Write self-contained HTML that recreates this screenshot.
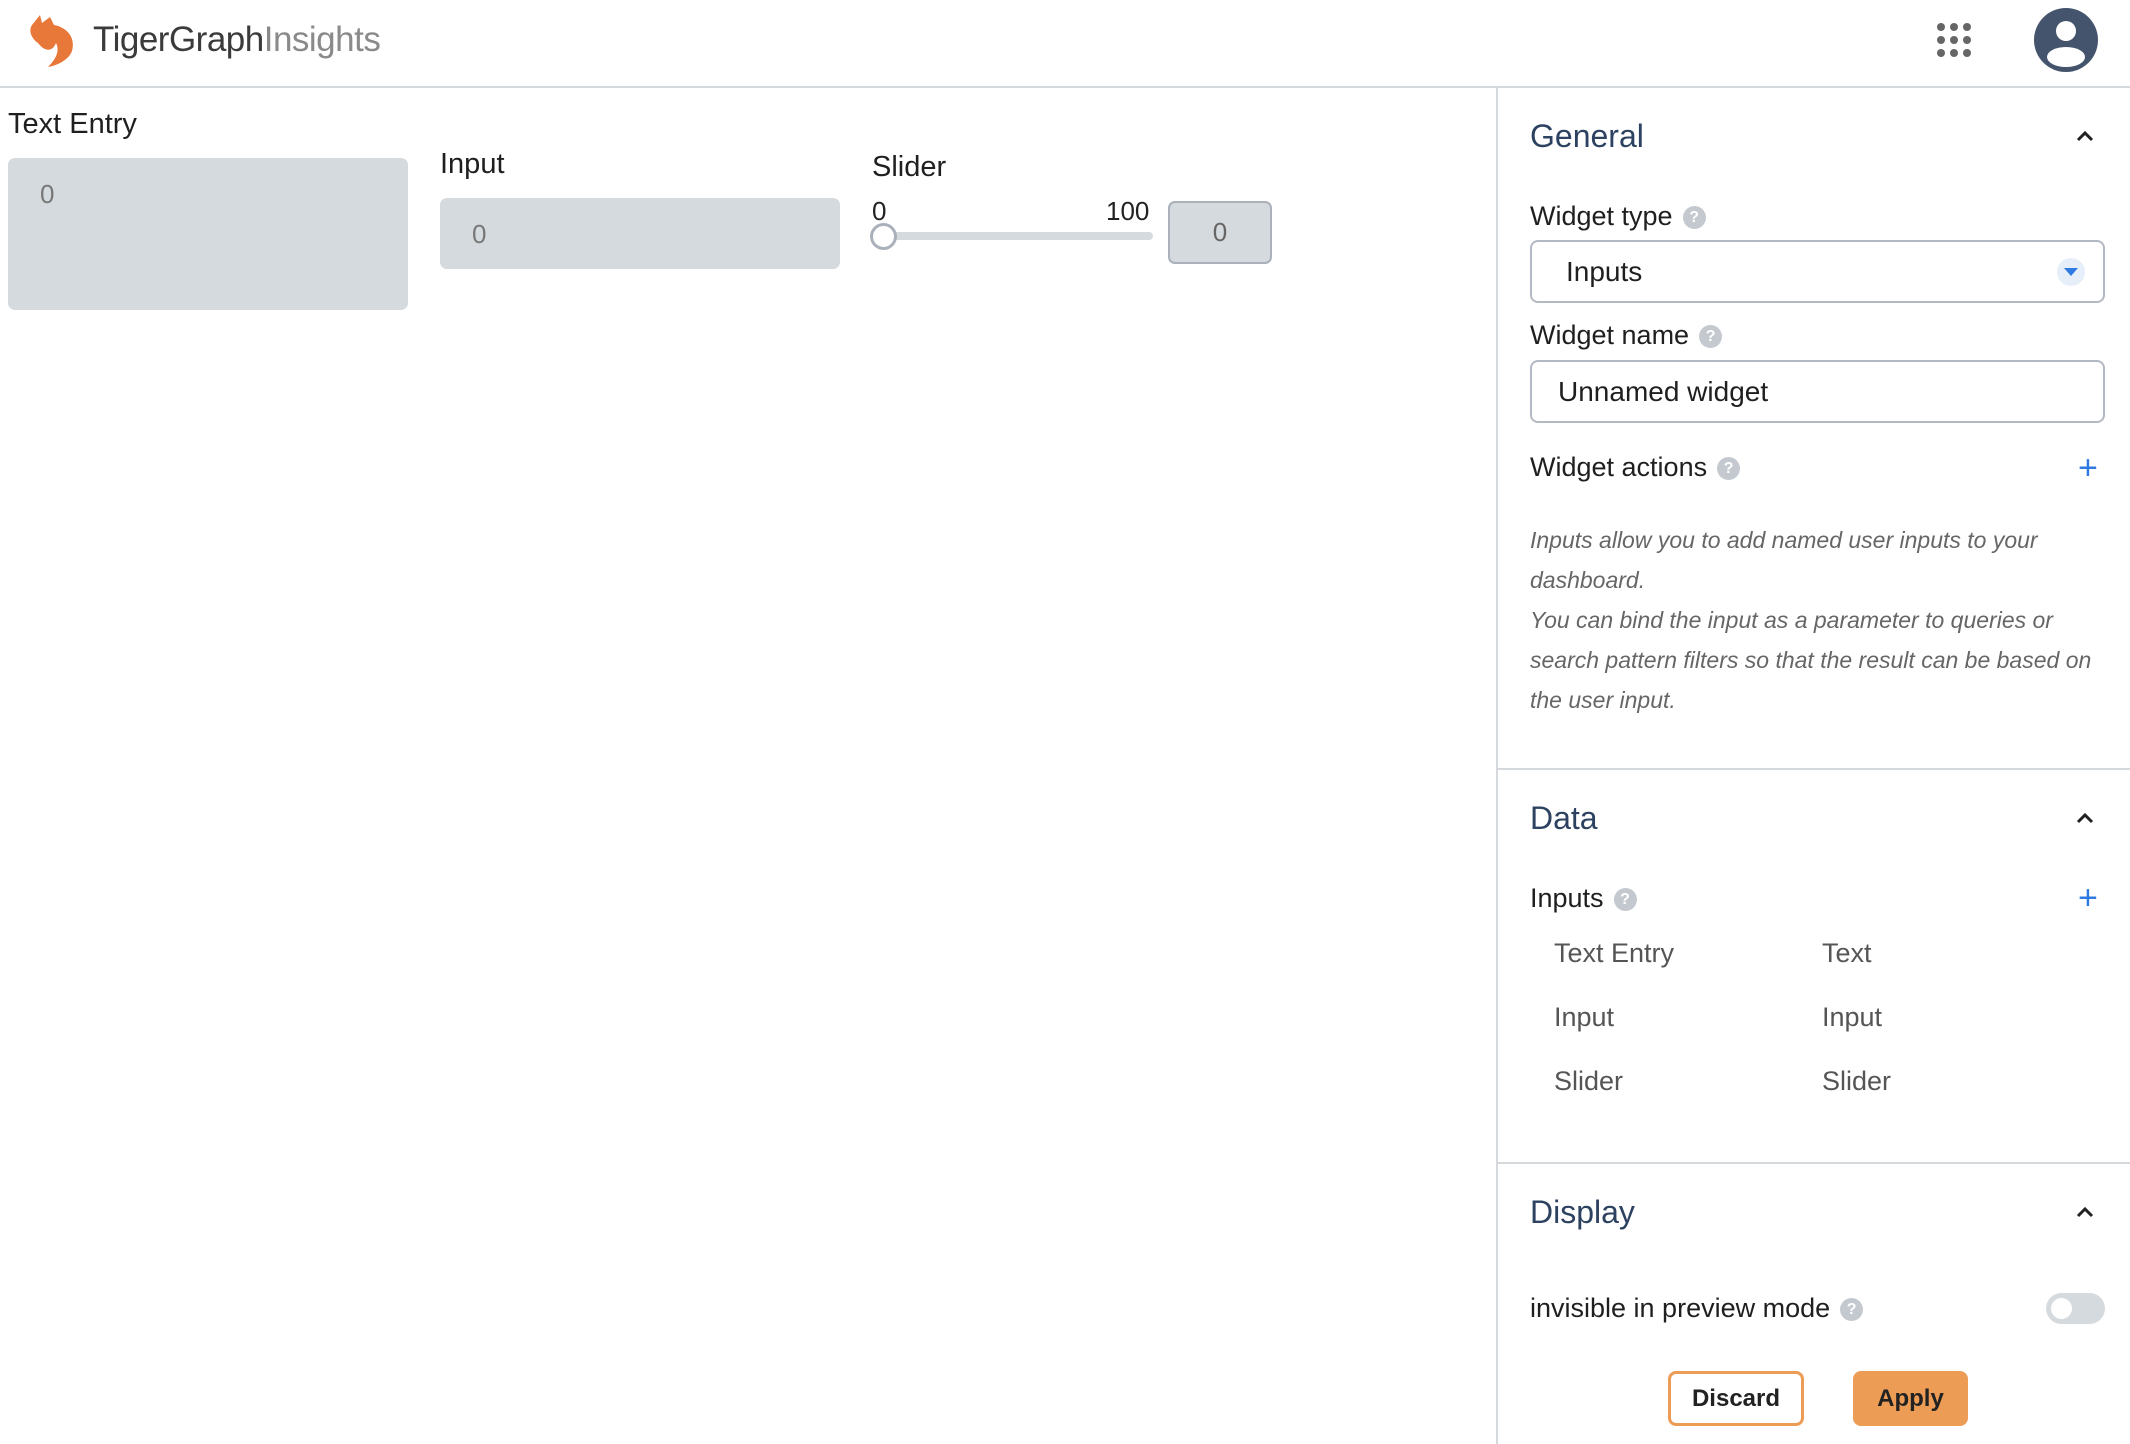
<!DOCTYPE html>
<html><head><meta charset="utf-8"><style>
*{box-sizing:border-box;margin:0;padding:0}
body{width:2130px;height:1444px;overflow:hidden;background:#fff;font-family:"Liberation Sans",sans-serif;color:#222;position:relative}
.a{position:absolute;white-space:nowrap}
.lbl{font-size:29px;color:#1f1f1f}
.box{position:absolute;background:#d5dade;border-radius:7px}
.zero{position:absolute;font-size:26px;color:#777}
.h{font-size:32px;color:#2c4260}
.f{font-size:27px;color:#1f1f1f}
.q{display:inline-block;width:23px;height:23px;border-radius:50%;background:#c4c9d0;color:#fff;font-size:16px;font-weight:bold;text-align:center;line-height:23px;vertical-align:middle;margin-left:10px}
.inp{position:absolute;left:1530px;width:575px;height:63px;border:2px solid #b3b9c2;border-radius:8px;font-size:28px;color:#1f1f1f;line-height:59px}
.it{font-size:23px;font-style:italic;color:#666;line-height:40px}
.row{font-size:27px;color:#555}
.hr{position:absolute;left:1497px;width:633px;height:2px;background:#d5d8dc}
.chev{position:absolute;left:2075px;width:20px;height:20px}
.plus{position:absolute;font-size:34px;color:#2f7ae0;left:2078px}
</style></head><body>
<svg class="a" style="left:26px;top:13px" width="54" height="54" viewBox="0 0 54 54"><path d="M6 12 L14 2 L16 10 L24 4 L28 12 C40 14 50 24 46 38 C43 47 30 53 22 54 C30 46 34 38 30 30 C26 40 18 38 12 30 C6 26 2 18 6 12 Z" fill="#e8783a"/></svg>
<div class="a" style="left:93px;top:20px;font-size:35px;letter-spacing:-0.5px"><span style="color:#3b3b3b">TigerGraph</span><span style="color:#8a8a8a">Insights</span></div>
<svg class="a" style="left:1937px;top:23px" width="34" height="34" viewBox="0 0 34 34" fill="#666"><circle cx="4" cy="4" r="4"/><circle cx="17" cy="4" r="4"/><circle cx="30" cy="4" r="4"/><circle cx="4" cy="17" r="4"/><circle cx="17" cy="17" r="4"/><circle cx="30" cy="17" r="4"/><circle cx="4" cy="30" r="4"/><circle cx="17" cy="30" r="4"/><circle cx="30" cy="30" r="4"/></svg>
<svg class="a" style="left:2033px;top:7px" width="66" height="66" viewBox="0 0 66 66"><circle cx="33" cy="33" r="32" fill="#44546c"/><circle cx="33" cy="24" r="10" fill="#fff"/><ellipse cx="33" cy="50" rx="19" ry="10" fill="#fff"/></svg>
<div class="a" style="left:0;top:86px;width:2130px;height:2px;background:#d5d8dc"></div>
<div class="a" style="left:1496px;top:88px;width:2px;height:1356px;background:#d5d8dc"></div>
<div class="a lbl" style="left:8px;top:108px">Text Entry</div>
<div class="box" style="left:8px;top:158px;width:400px;height:152px"></div>
<div class="zero" style="left:40px;top:179px">0</div>
<div class="a lbl" style="left:440px;top:148px">Input</div>
<div class="box" style="left:440px;top:198px;width:400px;height:71px"></div>
<div class="zero" style="left:472px;top:219px">0</div>
<div class="a lbl" style="left:872px;top:151px">Slider</div>
<div class="a" style="left:872px;top:196px;font-size:26px;color:#222">0</div>
<div class="a" style="left:1106px;top:196px;font-size:26px;color:#222">100</div>
<div class="a" style="left:883px;top:232px;width:270px;height:8px;border-radius:4px;background:#d5dade"></div>
<div class="a" style="left:870px;top:223px;width:27px;height:27px;border-radius:50%;background:#fff;border:3px solid #aab1bb"></div>
<div class="a" style="left:1168px;top:201px;width:104px;height:63px;background:#d5dade;border:2px solid #aab1bb;border-radius:7px;text-align:center;line-height:59px;font-size:26px;color:#666">0</div>
<div class="a h" style="left:1530px;top:118px">General</div>
<svg class="chev" style="top:126px" viewBox="0 0 20 20"><path d="M3 14 L10 7 L17 14" fill="none" stroke="#222" stroke-width="3"/></svg>
<div class="a f" style="left:1530px;top:201px">Widget type<span class="q">?</span></div>
<div class="inp" style="top:240px;padding-left:34px">Inputs</div>
<div class="a" style="left:2057px;top:258px;width:28px;height:28px;border-radius:50%;background:#e6eefa"></div>
<svg class="a" style="left:2063px;top:267px" width="16" height="10" viewBox="0 0 16 10"><path d="M1 1 L15 1 L8 9 Z" fill="#2f7ae0"/></svg>
<div class="a f" style="left:1530px;top:320px">Widget name<span class="q">?</span></div>
<div class="inp" style="top:360px;padding-left:26px">Unnamed widget</div>
<div class="a f" style="left:1530px;top:452px">Widget actions<span class="q">?</span></div>
<div class="plus" style="top:449px">+</div>
<div class="a it" style="left:1530px;top:520px;white-space:normal;width:590px">Inputs allow you to add named user inputs to your dashboard.<br>You can bind the input as a parameter to queries or search pattern filters so that the result can be based on the user input.</div>
<div class="hr" style="top:768px"></div>
<div class="a h" style="left:1530px;top:800px">Data</div>
<svg class="chev" style="top:808px" viewBox="0 0 20 20"><path d="M3 14 L10 7 L17 14" fill="none" stroke="#222" stroke-width="3"/></svg>
<div class="a f" style="left:1530px;top:883px">Inputs<span class="q">?</span></div>
<div class="plus" style="top:879px">+</div>
<div class="a row" style="left:1554px;top:938px">Text Entry</div><div class="a row" style="left:1822px;top:938px">Text</div>
<div class="a row" style="left:1554px;top:1002px">Input</div><div class="a row" style="left:1822px;top:1002px">Input</div>
<div class="a row" style="left:1554px;top:1066px">Slider</div><div class="a row" style="left:1822px;top:1066px">Slider</div>
<div class="hr" style="top:1162px"></div>
<div class="a h" style="left:1530px;top:1194px">Display</div>
<svg class="chev" style="top:1202px" viewBox="0 0 20 20"><path d="M3 14 L10 7 L17 14" fill="none" stroke="#222" stroke-width="3"/></svg>
<div class="a f" style="left:1530px;top:1293px">invisible in preview mode<span class="q">?</span></div>
<div class="a" style="left:2046px;top:1293px;width:59px;height:31px;border-radius:16px;background:#d5dade"></div>
<div class="a" style="left:2051px;top:1298px;width:21px;height:21px;border-radius:50%;background:#fff"></div>
<div class="a" style="left:1668px;top:1371px;width:136px;height:55px;border:3px solid #ec9c55;border-radius:8px;text-align:center;line-height:49px;font-size:24px;font-weight:bold;color:#222">Discard</div>
<div class="a" style="left:1853px;top:1371px;width:115px;height:55px;background:#ec9c55;border-radius:8px;text-align:center;line-height:55px;font-size:24px;font-weight:bold;color:#222">Apply</div>
</body></html>
